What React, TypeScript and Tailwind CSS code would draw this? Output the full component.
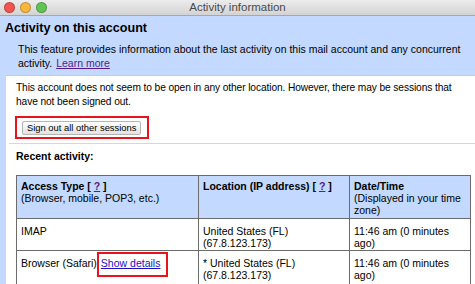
import React from "react";

const font = { fontFamily: '"Liberation Sans", Arial, sans-serif' };

function TrafficLights() {
  const dots = ["bg-[#f2554f]", "bg-[#f6b73c]", "bg-[#5fc452]"];
  return (
    <div className="flex items-center gap-[5px] pl-[4px]">
      {dots.map((c) => (
        <span key={c} className={`w-[11px] h-[11px] rounded-full border border-black/20 ${c}`} />
      ))}
    </div>
  );
}

function Help() {
  return (
    <span>
      [ <a className="text-[#551a8b] underline cursor-pointer">?</a> ]
    </span>
  );
}

const cell = "border border-[#6b6b6b] px-[4px]";

export default function App() {
  return (
    <div className="w-[475px] h-[284px] overflow-hidden bg-[#c3d9ff] text-black text-[10.5px]" style={font}>
      {/* title bar */}
      <div className="relative h-[16px] flex items-center bg-gradient-to-b from-[#ececec] to-[#d3d3d3] border-b border-[#a8a8a8]">
        <TrafficLights />
        <div className="absolute inset-0 flex items-center justify-center text-[11.5px] text-[#4a4a4a]">Activity information</div>
      </div>

      {/* account header */}
      <div className="px-[5px] pt-[4px]">
        <div className="text-[12.6px] font-bold leading-[16px]">Activity on this account</div>
        <div className="pl-[13px] pt-[6px] leading-[14px]">
          This feature provides information about the last activity on this mail account and any concurrent activity.{" "}
          <a className="ml-[1px] text-[#551a8b] underline cursor-pointer">Learn more</a>
        </div>
      </div>

      {/* white panel */}
      <div className="ml-[6px] mt-[5px] h-full bg-white border-t border-[#b7cdf5]">
        <div className="pl-[10px] pt-[5px] leading-[14px] text-[10.2px] tracking-[-0.1px]">
          This account does not seem to be open in any other location. However, there may be sessions that have not been signed out.
        </div>
        <div className="ml-[9px] mt-[7px] inline-flex items-center h-[23px] border-2 border-[#e8141b] pl-[5px] pr-[6px]">
          <button className="h-[14px] px-[4px] text-[9.4px] leading-[12px] rounded-[2px] border border-[#b5b5b5] bg-gradient-to-b from-white to-[#e2e2e2] whitespace-nowrap">
            Sign out all other sessions
          </button>
        </div>
        <div className="ml-[3px] mt-[4px] border-t border-[#c3d9ff]" />
        <div className="pl-[10px] pt-[5px] font-bold leading-[14px]">Recent activity:</div>

        <table className="ml-[10px] mt-[12px] w-[455px] border-collapse border border-[#6b6b6b] leading-[12px]">
          <thead>
            <tr className="bg-[#c3d9ff] align-top h-[43px]">
              <th className={`w-[182px] text-left font-normal pt-[4px] ${cell}`}>
                <b>Access Type</b> <b><Help /></b>
                <br />
                (Browser, mobile, POP3, etc.)
              </th>
              <th className={`w-[151px] text-left font-normal pt-[4px] ${cell}`}>
                <b>Location (IP address)</b> <b><Help /></b>
              </th>
              <th className={`text-left font-normal pt-[4px] pr-[1px] ${cell}`}>
                <b>Date/Time</b>
                <br />
                (Displayed in your time zone)
              </th>
            </tr>
          </thead>
          <tbody>
            <tr className="align-top h-[32px]">
              <td className={`pt-[6px] ${cell}`}>IMAP</td>
              <td className={`pt-[6px] ${cell}`}>
                United States (FL)
                <br />
                (67.8.123.173)
              </td>
              <td className={`pt-[6px] pr-[12px] ${cell}`}>11:46 am (0 minutes ago)</td>
            </tr>
            <tr className="align-top h-[34px]">
              <td className={`pt-[6px] ${cell}`}>
                Browser (Safari)
                <span className="border-2 border-[#e8141b] pl-[2px] pr-[6px] pt-[3px] pb-[6px]">
                  <a className="text-[#1a0dcc] underline cursor-pointer">Show details</a>
                </span>
              </td>
              <td className={`pt-[6px] ${cell}`}>
                * United States (FL)
                <br />
                (67.8.123.173)
              </td>
              <td className={`pt-[6px] pr-[12px] ${cell}`}>11:46 am (0 minutes ago)</td>
            </tr>
          </tbody>
        </table>
      </div>
    </div>
  );
}
